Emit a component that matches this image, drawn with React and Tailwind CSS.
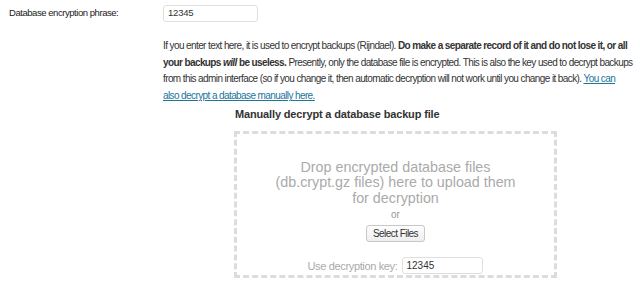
export default function App() {
  const sans = { fontFamily: '"Liberation Sans", Arial, sans-serif' };
  return (
    <div className="w-[640px] h-[297px] bg-white overflow-hidden text-[#333]" style={sans}>
      <div className="flex items-center pt-[5px]">
        <div className="w-[163px] pl-[9px] text-[9.5px] tracking-[-0.45px] text-[#222]">Database encryption phrase:</div>
        <div className="w-[95px] h-[17px] border border-[#dfdfdf] rounded-[3px] text-[9.5px] tracking-[-0.2px] pl-[4px] flex items-center text-[#333]">12345</div>
      </div>
      <div className="ml-[163px] mt-[16px] w-[477px] text-[10px] tracking-[-0.6px] leading-[16.7px] text-[#333] whitespace-nowrap">
        If you enter text here, it is used to encrypt backups (Rijndael). <b>Do make a separate record of it and do not lose it, or all</b>
        <br />
        <b>your backups <i>will</i> be useless.</b> Presently, only the database file is encrypted. This is also the key used to decrypt backups
        <br />
        from this admin interface (so if you change it, then automatic decryption will not work until you change it back). <span className="text-[#21759b] underline">You can</span>
        <br />
        <span className="text-[#21759b] underline">also decrypt a database manually here.</span>
      </div>
      <div className="ml-[234px] w-[323px] mt-[1px]">
        <div className="text-[11px] tracking-[-0.15px] leading-[17px] font-bold text-[#333] h-[17px] pl-[1px]">Manually decrypt a database backup file</div>
        <div className="mt-[8px] h-[147px] border-[3px] border-dashed border-[#dcdcdc] flex flex-col items-center">
          <div className="mt-[26px] w-[260px] text-center text-[14.3px] leading-[15.5px] text-[#aaa]">
            Drop encrypted database files (db.crypt.gz files) here to upload them for decryption
          </div>
          <div className="mt-[3px] text-[10px] text-[#999] leading-[12px]">or</div>
          <div className="mt-[4px] h-[17px] px-[6px] border border-[#c8c8c8] rounded-[3px] bg-gradient-to-b from-[#fefefe] to-[#eeeeee] text-[10px] tracking-[-0.55px] text-[#333] flex items-center">Select Files</div>
          <div className="mt-[15px] flex items-center">
            <span className="text-[11px] tracking-[-0.35px] text-[#aaa] mr-[5px]">Use decryption key:</span>
            <div className="w-[81px] h-[17px] border border-[#dfdfdf] rounded-[3px] text-[10px] pl-[3px] flex items-center text-[#333]">12345</div>
          </div>
        </div>
      </div>
    </div>
  );
}
